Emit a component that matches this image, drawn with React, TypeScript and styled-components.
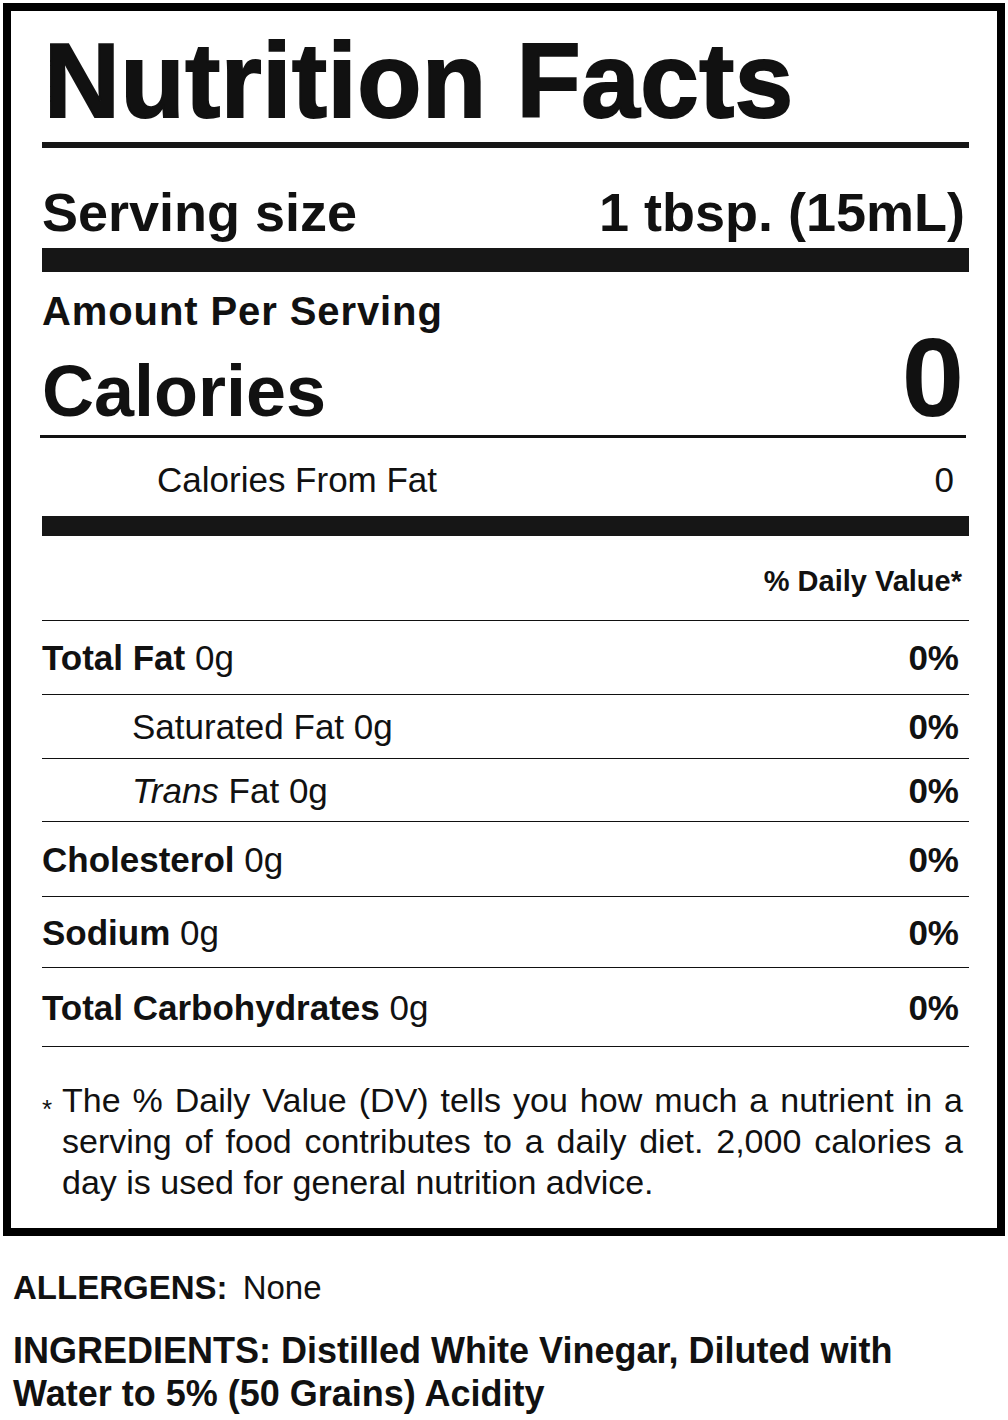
import React from "react";
import styled, { createGlobalStyle } from "styled-components";

const Global = createGlobalStyle`
  html, body { margin: 0; padding: 0; background: #fff; }
  body { font-family: "Liberation Sans", Arial, Helvetica, sans-serif; color: #111; }
`;

const Page = styled.div`
  width: 1008px;
  padding: 3px 3px 0 3px;
  box-sizing: border-box;
`;

const Label = styled.section`
  border: 8px solid #000;
  padding: 17px 28px 25px 31px;
  display: flex;
  flex-direction: column;
`;

const Title = styled.h1`
  margin: 0 0 0 2px;
  font-size: 105px;
  line-height: 1;
  font-weight: 700;
  letter-spacing: 0.6px;
  color: #111;
  -webkit-text-stroke: 2px #111;
  white-space: nowrap;
`;

const Rule = styled.div<{ $h: number; $mt?: number }>`
  height: ${(p) => p.$h}px;
  margin-top: ${(p) => p.$mt ?? 0}px;
  background: #161616;
`;

const ServingRow = styled.div`
  margin-top: 37px;
  display: flex;
  justify-content: space-between;
  align-items: baseline;
  font-size: 54px;
  line-height: 1;
  font-weight: 700;
  padding-right: 4px;
`;

const Amount = styled.div`
  margin-top: 19px;
  font-size: 40px;
  line-height: 1;
  font-weight: 700;
  letter-spacing: 0.9px;
`;

const CaloriesRow = styled.div`
  margin-top: 2px;
  display: flex;
  justify-content: space-between;
  align-items: baseline;
  font-weight: 700;
  padding-right: 5px;
`;

const CaloriesLabel = styled.span`
  font-size: 72px;
  line-height: 1;
`;

const CaloriesValue = styled.span`
  font-size: 112px;
  line-height: 0.8;
`;

const CaloriesRule = styled.div`
  margin: 8px 3px 0 -2px;
  height: 3px;
  background: #111;
`;

const FromFatRow = styled.div`
  height: 78px;
  box-sizing: border-box;
  display: flex;
  align-items: center;
  justify-content: space-between;
  padding: 5px 15px 0 115px;
  font-size: 35px;
  line-height: 1;
`;

const DVHeader = styled.div`
  height: 85px;
  padding: 6px 7px 0 0;
  box-sizing: border-box;
  display: flex;
  align-items: center;
  justify-content: flex-end;
  font-size: 29px;
  line-height: 1;
  font-weight: 700;
  border-bottom: 1px solid #111;
`;

const NutrientRow = styled.div<{ $h: number; $indent?: boolean }>`
  height: ${(p) => p.$h}px;
  box-sizing: border-box;
  display: flex;
  align-items: center;
  justify-content: space-between;
  padding: 0 10px 0 ${(p) => (p.$indent ? 90 : 0)}px;
  font-size: 35px;
  line-height: 1;
  border-bottom: 1px solid #111;
`;

const Bold = styled.b`
  font-weight: 700;
`;

const Italic = styled.i`
  font-style: italic;
`;

const Percent = styled.span`
  font-weight: 700;
`;

const Footnote = styled.div`
  margin-top: 33px;
  display: flex;
  padding-right: 6px;
`;

const Star = styled.span`
  flex: 0 0 20px;
  font-size: 26px;
  line-height: 41px;
  margin-top: 9px;
`;

const FootText = styled.p`
  margin: 0;
  flex: 1;
  font-size: 34px;
  line-height: 41px;
  text-align: justify;
`;

const Below = styled.div`
  padding: 31px 60px 0 10px;
  display: flex;
  flex-direction: column;
  gap: 20px;
`;

const Allergens = styled.p`
  margin: 0;
  font-size: 33px;
  line-height: 42px;
  word-spacing: 6px;
`;

const Ingredients = styled.p`
  margin: 0;
  font-size: 36px;
  line-height: 43px;
  font-weight: 700;
`;

const nutrients = [
  { label: "Total Fat", amount: "0g", dv: "0%", h: 74, indent: false, italic: false },
  { label: "Saturated Fat", amount: "0g", dv: "0%", h: 64, indent: true, italic: false },
  { label: "Trans", amount: "0g", dv: "0%", h: 63, indent: true, italic: true },
  { label: "Cholesterol", amount: "0g", dv: "0%", h: 75, indent: false, italic: false },
  { label: "Sodium", amount: "0g", dv: "0%", h: 71, indent: false, italic: false },
  { label: "Total Carbohydrates", amount: "0g", dv: "0%", h: 79, indent: false, italic: false },
];

export default function App() {
  return (
    <Page>
      <Global />
      <Label>
        <Title>Nutrition Facts</Title>
        <Rule $h={6} $mt={9} />
        <ServingRow>
          <span>Serving size</span>
          <span>1 tbsp. (15mL)</span>
        </ServingRow>
        <Rule $h={24} $mt={9} />
        <Amount>Amount Per Serving</Amount>
        <CaloriesRow>
          <CaloriesLabel>Calories</CaloriesLabel>
          <CaloriesValue>0</CaloriesValue>
        </CaloriesRow>
        <CaloriesRule />
        <FromFatRow>
          <span>Calories From Fat</span>
          <span>0</span>
        </FromFatRow>
        <Rule $h={20} />
        <DVHeader>% Daily Value*</DVHeader>
        {nutrients.map((n) => (
          <NutrientRow key={n.label} $h={n.h} $indent={n.indent}>
            <span>
              {n.italic ? (
                <>
                  <Italic>Trans</Italic> Fat {n.amount}
                </>
              ) : n.indent ? (
                <>
                  {n.label} {n.amount}
                </>
              ) : (
                <>
                  <Bold>{n.label}</Bold> {n.amount}
                </>
              )}
            </span>
            <Percent>{n.dv}</Percent>
          </NutrientRow>
        ))}
        <Footnote>
          <Star>*</Star>
          <FootText>
            The % Daily Value (DV) tells you how much a nutrient in a serving of food
            contributes to a daily diet. 2,000 calories a day is used for general
            nutrition advice.
          </FootText>
        </Footnote>
      </Label>
      <Below>
        <Allergens>
          <Bold>ALLERGENS:</Bold> None
        </Allergens>
        <Ingredients>
          INGREDIENTS: Distilled White Vinegar, Diluted with Water to 5% (50 Grains) Acidity
        </Ingredients>
      </Below>
    </Page>
  );
}
